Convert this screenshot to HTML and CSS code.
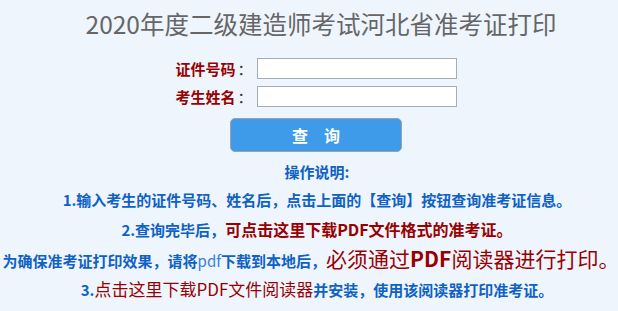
FILE: index.html
```html
<!DOCTYPE html>
<html lang="zh-CN">
<head>
<meta charset="utf-8">
<title>2020年度二级建造师考试河北省准考证打印</title>
<link rel="stylesheet" href="styles.css">
</head>
<body>
<div class="page">
  <h1 class="title">2020年度二级建造师考试河北省准考证打印</h1>
  <div class="form">
    <div class="row">
      <label class="label">证件号码<span class="colon">：</span></label>
      <input class="field" type="text">
    </div>
    <div class="row">
      <label class="label">考生姓名<span class="colon">：</span></label>
      <input class="field" type="text">
    </div>
  </div>
  <div class="actions">
    <button class="btn" type="button">查　询</button>
  </div>
  <div class="help">
    <p class="help-title shift">操作说明:</p>
    <p class="line shift">1.输入考生的证件号码、姓名后，点击上面的【查询】按钮查询准考证信息。</p>
    <p class="line shift">2.查询完毕后，<span class="red red-b">可点击这里下载PDF文件格式的准考证。</span></p>
    <p class="line">为确保准考证打印效果，请将<span class="pdf">pdf</span>下载到本地后，<span class="red red-l">必须通过<b>PDF</b>阅读器进行打印。</span></p>
    <p class="line shift">3.<span class="red red-m">点击这里下载PDF文件阅读器</span>并安装，使用该阅读器打印准考证。</p>
  </div>
</div>
</body>
</html>
```
FILE: styles.css
```css
html, body {
  margin: 0;
  padding: 0;
  background: #eef5fd;
}
body {
  font-family: "Noto Sans CJK SC", "Noto Sans", sans-serif;
}
.page {
  width: 618px;
  display: flex;
  flex-direction: column;
  align-items: center;
}
.title {
  margin: 0;
  padding-top: 8px;
  padding-left: 24px;
  font-size: 24.5px;
  line-height: 32px;
  font-weight: normal;
  color: #666666;
}
.form {
  margin-top: 18px;
  display: flex;
  flex-direction: column;
  gap: 7px;
  padding-left: 14px;
}
.row {
  display: flex;
  align-items: center;
  gap: 4px;
}
.label {
  font-size: 15px;
  font-weight: bold;
  color: #990000;
  line-height: 21px;
}
.colon {
  color: #333;
  font-weight: normal;
  margin-left: 2px;
}
.field {
  box-sizing: border-box;
  width: 200px;
  height: 21px;
  margin: 0;
  border: 1px solid #a5adb8;
  background: #fff;
  outline: none;
}
.actions {
  margin-top: 11px;
  padding-left: 14px;
}
.btn {
  box-sizing: border-box;
  width: 172px;
  height: 34px;
  background: #3d9be9;
  border: 1px solid #9aa3ad;
  border-radius: 5px;
  color: #fff;
  font-family: "Noto Sans CJK SC", sans-serif;
  font-size: 16px;
  font-weight: bold;
  padding: 0;
}
.help {
  margin-top: 7px;
  padding-left: 4px;
  display: flex;
  flex-direction: column;
  align-items: center;
}
.help p {
  margin: 0;
  white-space: nowrap;
  color: #0f62c4;
  font-weight: bold;
  font-size: 15px;
}
.help .shift {
  padding-left: 12px;
}
.help-title {
  height: 26px;
  line-height: 26px;
}
.line {
  height: 29.5px;
  line-height: 29.5px;
}
.red {
  color: #990000;
}
.red-b {
  font-size: 16px;
  font-weight: bold;
}
.red-l {
  font-size: 21px;
  font-weight: normal;
}
.red-l b {
  font-weight: bold;
}
.red-m {
  font-size: 17px;
  font-weight: normal;
}
.pdf {
  color: #3c7fd6;
  font-weight: normal;
}
```
